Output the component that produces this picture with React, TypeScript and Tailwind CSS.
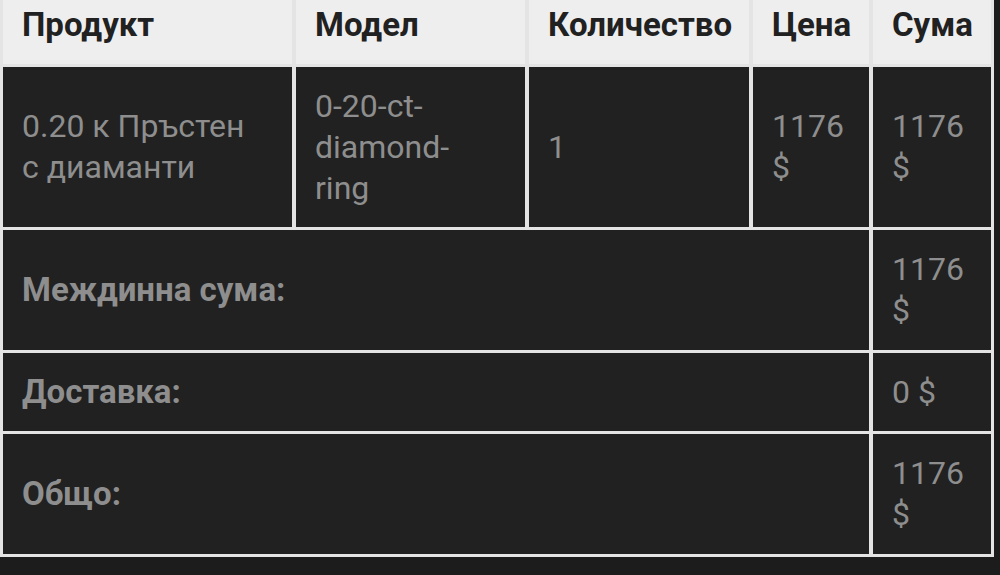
import React from "react";

const head = "bg-[#eeeeee] text-[#212121] font-bold text-[33px] leading-[40px] pt-[5px] pl-[19px]";
const cell = "bg-[#212121] text-[#8e8e8e] text-[32px] leading-[41px] pl-[19px] pr-[30px] flex items-center";
const label = "bg-[#212121] text-[#8e8e8e] font-bold text-[33px] leading-[40px] px-[19px] flex items-center col-span-4";

export default function App() {
  return (
    <div className="w-[1000px] h-[575px] bg-[#1c1c1c] overflow-hidden" style={{ fontFamily: "Roboto, 'Noto Sans', sans-serif" }}>
      <div className="w-[994px] bg-[#e4e4e4] pl-[3px] pr-[3px] pb-[3px] grid grid-cols-[289px_229px_220px_116px_118px] grid-rows-[64px_160px_120px_78px_120px] gap-x-[4px] gap-y-[3px]">
        <div className={head}>Продукт</div>
        <div className={head}>Модел</div>
        <div className={head}>Количество</div>
        <div className={head}>Цена</div>
        <div className={head}>Сума</div>

        <div className={cell}>0.20 к Пръстен с диаманти</div>
        <div className={cell}>0-20-ct-diamond-ring</div>
        <div className={cell}>1</div>
        <div className={cell}>1176 $</div>
        <div className={cell}>1176 $</div>

        <div className={label}>Междинна сума:</div>
        <div className={cell}>1176 $</div>

        <div className={label}>Доставка:</div>
        <div className={cell}>0 $</div>

        <div className={label}>Общо:</div>
        <div className={cell}>1176 $</div>
      </div>
    </div>
  );
}
